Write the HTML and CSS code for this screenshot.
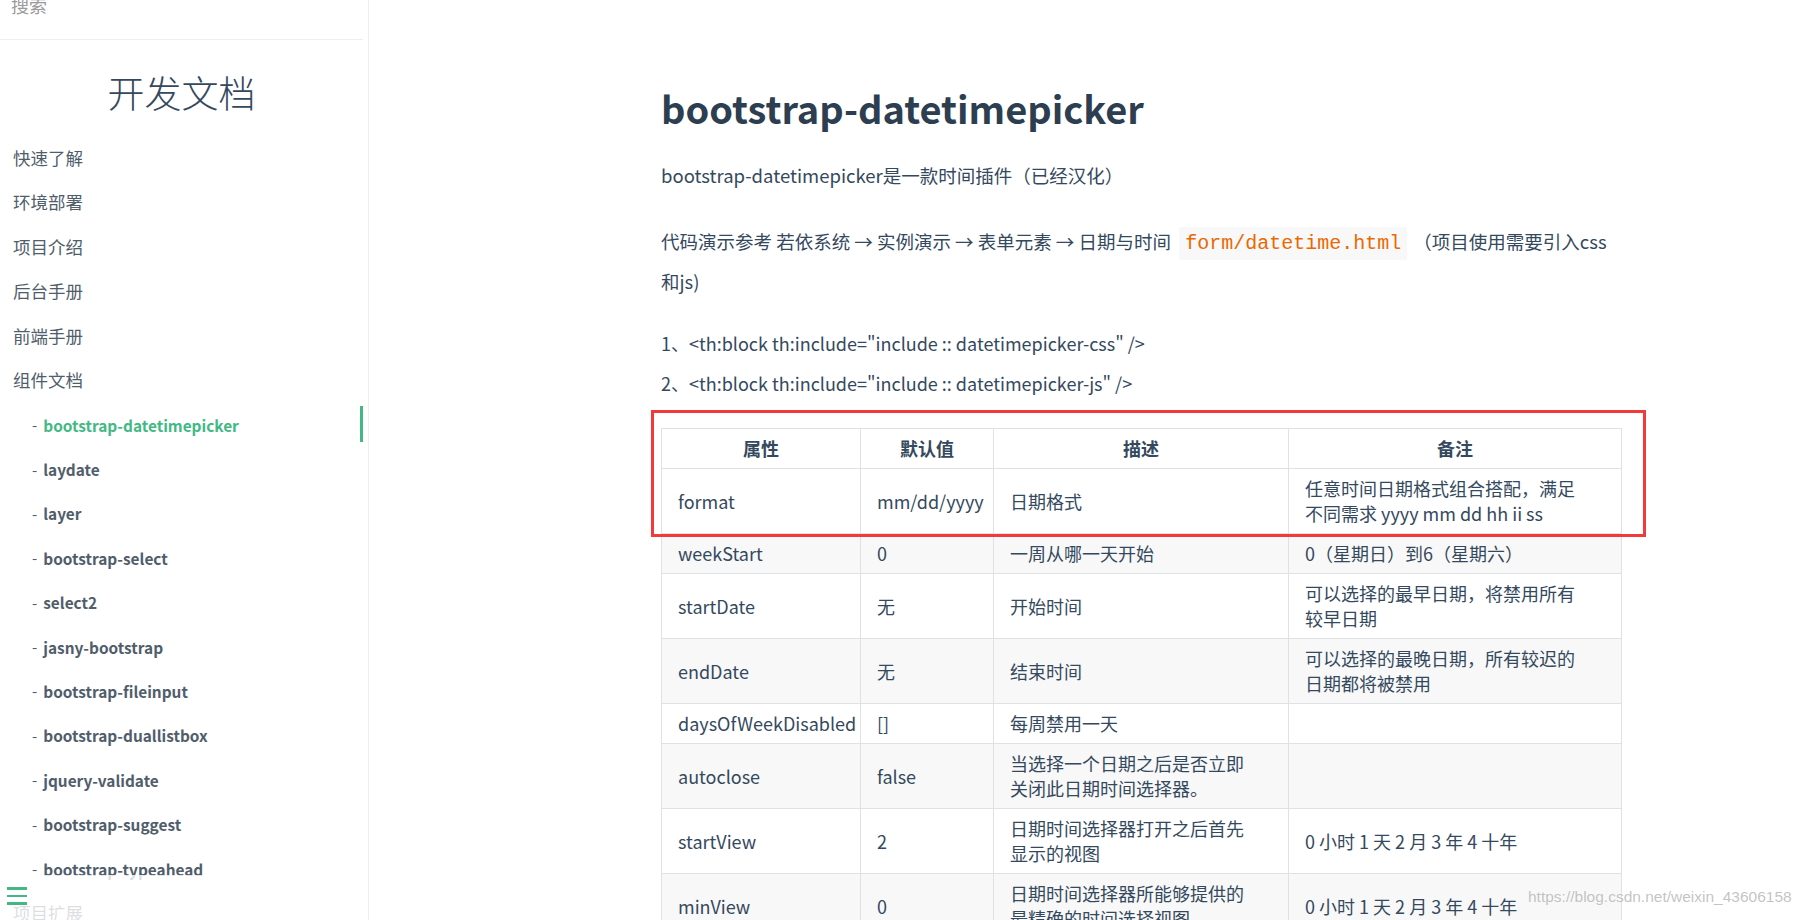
FILE: index.html
```html
<!DOCTYPE html>
<html lang="zh-CN">
<head>
<meta charset="utf-8">
<title>bootstrap-datetimepicker - 开发文档</title>
<link rel="stylesheet" href="styles.css">
</head>
<body>
<div class="layout">
  <aside class="sidebar">
    <div class="sidebar-inner">
      <div class="search"><div class="search-input">搜索</div></div>
      <h1 class="app-name">开发文档</h1>
      <ul class="nav">
        <li><a>快速了解</a></li>
        <li><a>环境部署</a></li>
        <li><a>项目介绍</a></li>
        <li><a>后台手册</a></li>
        <li><a>前端手册</a></li>
        <li><a>组件文档</a>
          <ul class="sub">
            <li class="active"><span class="dash">-</span><a>bootstrap-datetimepicker</a></li>
            <li><span class="dash">-</span><a>laydate</a></li>
            <li><span class="dash">-</span><a>layer</a></li>
            <li><span class="dash">-</span><a>bootstrap-select</a></li>
            <li><span class="dash">-</span><a>select2</a></li>
            <li><span class="dash">-</span><a>jasny-bootstrap</a></li>
            <li><span class="dash">-</span><a>bootstrap-fileinput</a></li>
            <li><span class="dash">-</span><a>bootstrap-duallistbox</a></li>
            <li><span class="dash">-</span><a>jquery-validate</a></li>
            <li><span class="dash">-</span><a>bootstrap-suggest</a></li>
            <li><span class="dash">-</span><a>bootstrap-typeahead</a></li>
          </ul>
        </li>
        <li><a>项目扩展</a></li>
        <li><a>插件集成</a></li>
      </ul>
    </div>
    <div class="sidebar-toggle"><span class="bars"><i></i><i></i><i></i></span></div>
  </aside>
  <main class="content">
    <section class="markdown">
      <h1 class="doc-title">bootstrap-datetimepicker</h1>
      <p class="p-intro">bootstrap-datetimepicker是一款时间插件（已经汉化）</p>
      <p class="p-demo">代码演示参考 若依系统 → 实例演示 → 表单元素 → 日期与时间 <code>form/datetime.html</code> （项目使用需要引入css和js)</p>
      <p class="p-inc">1、&lt;th:block th:include="include :: datetimepicker-css" /&gt;<br>2、&lt;th:block th:include="include :: datetimepicker-js" /&gt;</p>
      <table class="props">
        <colgroup>
          <col class="c1"><col class="c2"><col class="c3"><col class="c4">
        </colgroup>
        <thead>
          <tr><th>属性</th><th>默认值</th><th>描述</th><th>备注</th></tr>
        </thead>
        <tbody>
          <tr><td>format</td><td class="val">mm/dd/yyyy</td><td class="wide">日期格式</td><td class="wide">任意时间日期格式组合搭配，满足不同需求 yyyy mm dd hh ii ss</td></tr>
          <tr><td>weekStart</td><td class="val">0</td><td class="wide">一周从哪一天开始</td><td class="wide">0（星期日）到6（星期六）</td></tr>
          <tr><td>startDate</td><td class="val">无</td><td class="wide">开始时间</td><td class="wide">可以选择的最早日期，将禁用所有较早日期</td></tr>
          <tr><td>endDate</td><td class="val">无</td><td class="wide">结束时间</td><td class="wide">可以选择的最晚日期，所有较迟的日期都将被禁用</td></tr>
          <tr><td>daysOfWeekDisabled</td><td class="val">[]</td><td class="wide">每周禁用一天</td><td class="wide"></td></tr>
          <tr><td>autoclose</td><td class="val">false</td><td class="wide">当选择一个日期之后是否立即关闭此日期时间选择器。</td><td class="wide"></td></tr>
          <tr><td>startView</td><td class="val">2</td><td class="wide">日期时间选择器打开之后首先显示的视图</td><td class="wide">0 小时 1 天 2 月 3 年 4 十年</td></tr>
          <tr><td>minView</td><td class="val">0</td><td class="wide">日期时间选择器所能够提供的最精确的时间选择视图</td><td class="wide">0 小时 1 天 2 月 3 年 4 十年</td></tr>
          <tr><td>maxView</td><td class="val">4</td><td class="wide">日期时间选择器最高能展示的选择范围视图</td><td class="wide">0 小时 1 天 2 月 3 年 4 十年</td></tr>
        </tbody>
      </table>
    </section>
  </main>
</div>
<div class="highlight-box"></div>
<div class="watermark">https://blog.csdn.net/weixin_43606158</div>
</body>
</html>
```

FILE: styles.css
```css
html, body {
  margin: 0;
  padding: 0;
  height: 920px;
  overflow: hidden;
}

body {
  position: relative;
  font-family: "Noto Sans CJK SC", "Noto Sans", sans-serif;
  color: #34495e;
  background: #fff;
}

.layout {
  display: flex;
  height: 920px;
}

/* ---------- sidebar ---------- */
.sidebar {
  position: relative;
  flex: none;
  width: 368px;
  border-right: 1px solid #eee;
  overflow: hidden;
}

.sidebar-inner {
  width: 363px;
}

.search {
  height: 39px;
  border-bottom: 1px solid #eee;
  overflow: hidden;
}

.search-input {
  margin-top: -7px;
  padding-left: 11px;
  font-size: 18px;
  line-height: 24px;
  color: #9a9a9a;
}

.app-name {
  margin: 32px 0 24px;
  font-size: 37px;
  line-height: 40px;
  font-weight: 300;
  text-align: center;
  color: #34495e;
}

.nav,
.sub {
  list-style: none;
  margin: 0;
  padding: 0;
}

.nav > li > a {
  display: block;
  padding-left: 13px;
  font-size: 17.5px;
  line-height: 44.4px;
  color: #505d6b;
}

.sub li {
  position: relative;
  display: flex;
  align-items: center;
  height: 44.4px;
  padding-left: 32px;
}

.dash {
  font-size: 15px;
  color: #505d6b;
  margin-right: 6px;
}

.sub a {
  font-size: 15.4px;
  font-weight: 700;
  color: #505d6b;
}

.sub li.active a {
  color: #42b983;
}

.sub li.active::after {
  content: "";
  position: absolute;
  right: 0;
  top: 4px;
  width: 3px;
  height: 36px;
  background: #42b983;
}

.sidebar-toggle {
  position: absolute;
  left: 0;
  bottom: 0;
  width: 363px;
  height: 45px;
  background: rgba(255, 255, 255, 0.8);
}

.bars {
  display: flex;
  flex-direction: column;
  gap: 5px;
  margin: 12px 0 0 7px;
  width: 20px;
}

.bars i {
  display: block;
  height: 2.6px;
  background: #42b983;
}

/* ---------- main ---------- */
.content {
  flex: 1;
  padding: 83px 0 0 292px;
}

.markdown {
  width: 960px;
}

.doc-title {
  margin: 0;
  font-size: 38px;
  line-height: 50px;
  font-weight: 700;
  color: #2c3e50;
}

.markdown p {
  font-size: 18.5px;
  line-height: 40px;
  margin: 0;
}

.markdown .p-intro {
  margin-top: 22px;
}

.markdown .p-demo {
  margin-top: 26px;
}

.markdown .p-inc {
  margin-top: 22px;
  font-size: 18px;
}

.markdown code {
  font-family: "Liberation Mono", monospace;
  font-size: 20px;
  line-height: 20px;
  color: #e96900;
  background: #f8f8f8;
  border-radius: 2px;
  padding: 5px 6px;
  margin: 0 2px 0 4px;
}

.props {
  margin-top: 25px;
  width: 960px;
  table-layout: fixed;
  border-collapse: collapse;
  font-size: 18px;
}

.props .c1 { width: 199px; }
.props .c2 { width: 133px; }
.props .c3 { width: 295px; }
.props .c4 { width: 333px; }

.props th,
.props td {
  border: 1px solid #dfe2e5;
  padding: 7px 8px 7px 16px;
  line-height: 25px;
  text-align: left;
  vertical-align: middle;
  white-space: normal;
}

.props th {
  font-weight: 700;
  text-align: center;
  padding-left: 8px;
  color: #34495e;
}

.props td.val {
  padding-right: 4px;
}

.props td.wide {
  padding-right: 36px;
}

.props tbody tr:nth-child(2n) td {
  background: #f8f8f8;
}

/* ---------- overlays ---------- */
.highlight-box {
  position: absolute;
  left: 651px;
  top: 410px;
  width: 995px;
  height: 127px;
  box-sizing: border-box;
  border: 3px solid #f33a3a;
}

.watermark {
  position: absolute;
  left: 1528px;
  top: 888px;
  font-family: "Liberation Sans", sans-serif;
  font-size: 15.5px;
  color: rgba(185, 185, 185, 0.85);
  white-space: nowrap;
}
```
